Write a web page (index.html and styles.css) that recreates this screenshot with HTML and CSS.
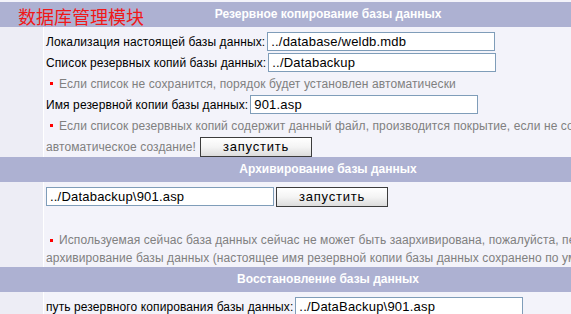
FILE: index.html
```html
<!DOCTYPE html>
<html lang="ru">
<head>
  <meta charset="UTF-8">
  <title>数据库管理模块</title>
  <link rel="stylesheet" href="styles.css">
</head>
<body>
<div class="page">
  <div class="module-title">数据库管理模块</div>

  <div class="section first">
    <div class="head">Резервное копирование базы данных</div>
    <div class="body">
      <div class="side"></div>
      <div class="main">
        <div class="row">
          <span class="label">Локализация настоящей базы данных:</span>
          <input class="field" type="text" value="../database/weldb.mdb">
        </div>
        <div class="row">
          <span class="label">Список резервных копий базы данных:</span>
          <input class="field" type="text" value="../Databackup">
        </div>
        <div class="row note"><i class="dot"></i>Если список не сохранится, порядок будет установлен автоматически</div>
        <div class="row">
          <span class="label">Имя резервной копии базы данных:</span>
          <input class="field" type="text" value="901.asp">
        </div>
        <div class="row note"><i class="dot"></i>Если список резервных копий содержит данный файл, производится покрытие, если не содержит, производится</div>
        <div class="row note">
          <span>автоматическое создание!</span>
          <button class="btn" type="button">запустить</button>
        </div>
      </div>
    </div>
  </div>

  <div class="section">
    <div class="head">Архивирование базы данных</div>
    <div class="body">
      <div class="side"></div>
      <div class="main">
        <div class="row tools">
          <input class="field" type="text" value="../Databackup\901.asp">
          <button class="btn" type="button">запустить</button>
        </div>
        <div class="para note">
          <div class="line"><i class="dot"></i>Используемая сейчас база данных сейчас не может быть заархивирована, пожалуйста, перед</div>
          <div class="line">архивирование базы данных (настоящее имя резервной копии базы данных сохранено по умолчанию)</div>
        </div>
      </div>
    </div>
  </div>

  <div class="section">
    <div class="head">Восстановление базы данных</div>
    <div class="body">
      <div class="side"></div>
      <div class="main">
        <div class="row">
          <span class="label">путь резервного копирования базы данных:</span>
          <input class="field" type="text" value="../DataBackup\901.asp">
        </div>
      </div>
    </div>
  </div>
</div>
</body>
</html>
```

FILE: styles.css
```css
* { box-sizing: border-box; }

html { overflow: hidden; }

body {
  margin: 0;
  background: #f3f3fa;
  font-family: "Liberation Sans", Arial, sans-serif;
  font-size: 12px;
  letter-spacing: 0.1px;
  color: #000;
}

.page {
  position: relative;
  width: 656px;
}

.module-title {
  position: absolute;
  left: 18px;
  top: 4px;
  font-family: "Noto Sans CJK SC", sans-serif;
  font-size: 18px;
  line-height: 24px;
  letter-spacing: 0;
  color: #f01818;
}

.section.first { padding-top: 2px; }

.head {
  height: 25px;
  line-height: 25px;
  background: #adb1d2;
  color: #fff;
  font-weight: bold;
  letter-spacing: 0;
  text-align: center;
}

.body {
  display: flex;
}

.side {
  width: 44px;
  flex: none;
  background: #ededf5;
  border-right: 1px solid #fff;
}

.main {
  flex: 1;
  padding: 4px 0 0 2px;
}

.row {
  display: flex;
  align-items: center;
  height: 21px;
  white-space: nowrap;
}

.label { margin-right: 2px; }

.note { color: #808080; }

.dot {
  display: inline-block;
  width: 3px;
  height: 3px;
  background: #f00;
  margin: 0 6px 0 4px;
  vertical-align: middle;
}

.field {
  width: 228px;
  height: 19px;
  padding: 0 3px;
  border: 1px solid #7f9db9;
  background: #fff;
  font-family: "Liberation Sans", Arial, sans-serif;
  font-size: 13px;
  letter-spacing: 0.2px;
  color: #000;
  outline: none;
}

.btn {
  width: 112px;
  height: 20px;
  margin-left: 4px;
  padding: 0;
  border: 1px solid #3c3c3c;
  background: linear-gradient(#ffffff, #f4f4f4 50%, #dcdcdc);
  font-family: "Liberation Sans", Arial, sans-serif;
  font-size: 13px;
  font-weight: normal;
  letter-spacing: 0.8px;
  color: #000;
}

.tools .btn { margin-left: 2px; }

.para {
  margin-top: 24px;
  line-height: 18px;
  white-space: nowrap;
}

.para .line { height: 18px; }
```
